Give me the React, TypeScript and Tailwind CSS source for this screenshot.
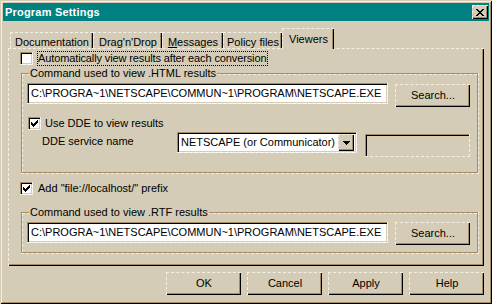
import React from 'react';

const raised =
  'border-t border-l border-dashed border-[#f4f0e6] shadow-[inset_-1px_-1px_0_#000,inset_-2px_-2px_0_#a28d68]';
const sunken =
  'border-r border-b border-dashed border-[#f4f0e6] shadow-[inset_1px_1px_0_#a28d68,inset_2px_2px_0_#000,inset_-1px_-1px_0_#d4ccb6]';

function CheckMark() {
  return (
    <svg width="7" height="7" viewBox="0 0 7 7" shapeRendering="crispEdges" className="block">
      <path
        d="M6 0h1v1h-1z M5 1h2v1h-2z M0 2h1v1h-1z M4 2h3v1h-3z M0 3h2v1h-2z M3 3h3v1h-3z M0 4h5v1h-5z M1 5h3v1h-3z M2 6h1v1h-1z"
        fill="#000"
      />
    </svg>
  );
}

function CheckBox({ checked }: { checked?: boolean }) {
  return (
    <div className={`w-[13px] h-[13px] shrink-0 bg-white pl-[3px] pt-[3px] ${sunken}`}>
      {checked && <CheckMark />}
    </div>
  );
}

function Btn({ children, className = '' }: { children: React.ReactNode; className?: string }) {
  return (
    <div
      className={`w-[75px] h-[23px] shrink-0 bg-[#d4ccb6] flex items-center justify-center pb-[1px] leading-[13px] ${raised} ${className}`}
    >
      {children}
    </div>
  );
}

function Field({ text }: { text: string }) {
  return (
    <div className={`w-[361px] h-[21px] shrink-0 bg-white flex items-center pl-[4px] leading-[13px] whitespace-nowrap overflow-hidden ${sunken}`}>
      {text}
    </div>
  );
}

function Group({
  label,
  className = '',
  children,
}: {
  label: string;
  className?: string;
  children: React.ReactNode;
}) {
  return (
    <div className={`relative border-r border-b border-dashed border-[#f4f0e6] ${className}`}>
      <div className="h-full border border-[#a28d68]">
        <div className="h-full border-t border-l border-dashed border-[#f4f0e6]">{children}</div>
      </div>
      <span className="absolute left-[8px] -top-[6px] px-[1px] bg-[#d4ccb6] leading-[13px] whitespace-nowrap">
        {label}
      </span>
    </div>
  );
}

function Tab({ w, children }: { w: string; children: React.ReactNode }) {
  return (
    <div
      className={`${w} h-[16px] shrink-0 pt-[3px] text-center leading-[13px] whitespace-nowrap border-t border-l border-dashed border-[#f4f0e6] shadow-[inset_-1px_0_0_#000,inset_-2px_0_0_#a28d68]`}
    >
      {children}
    </div>
  );
}

function CloseGlyph() {
  return (
    <svg width="8" height="7" viewBox="0 0 8 7" shapeRendering="crispEdges" className="block">
      <path
        d="M0 0h2v1h-2z M6 0h2v1h-2z M1 1h2v1h-2z M5 1h2v1h-2z M2 2h4v1h-4z M3 3h2v1h-2z M2 4h4v1h-4z M1 5h2v1h-2z M5 5h2v1h-2z M0 6h2v1h-2z M6 6h2v1h-2z"
        fill="#000"
      />
    </svg>
  );
}

function DownArrow() {
  return (
    <svg width="7" height="4" viewBox="0 0 7 4" shapeRendering="crispEdges" className="block">
      <path d="M0 0h7v1h-7z M1 1h5v1h-5z M2 2h3v1h-3z M3 3h1v1h-1z" fill="#000" />
    </svg>
  );
}

export default function App() {
  return (
    <div className="w-[492px] h-[304px] overflow-hidden bg-[#d4ccb6] text-black text-[11px] [font-family:'Liberation_Sans',Arial,sans-serif]">
      <div className="w-full h-full p-[2px] shadow-[inset_1px_1px_0_#d4ccb6,inset_-1px_-1px_0_#000,inset_2px_2px_0_#f4f0e6,inset_-2px_-2px_0_#a28d68]">
        {/* Title bar */}
        <div className="mx-[1px] mt-[1px] h-[18px] bg-[#008080] flex items-center justify-between pl-[2px] pr-[1px]">
          <span className="text-white font-bold text-[11px] tracking-[0.2px] leading-[13px]">Program Settings</span>
          <div className={`w-[16px] h-[14px] bg-[#d4ccb6] pl-[3px] pt-[3px] ${raised}`}>
            <CloseGlyph />
          </div>
        </div>

        {/* Tab control */}
        <div className="px-[6px] mt-[7px]">
          <div className="flex items-end h-[20px] pl-[2px]">
            <Tab w="w-[83px]">Documentation</Tab>
            <Tab w="w-[69px]">Drag&apos;n&apos;Drop</Tab>
            <Tab w="w-[61px]">
              <span className="underline">M</span>essages
            </Tab>
            <Tab w="w-[59px]">Policy files</Tab>
            <div className="relative z-10 w-[52px] h-[21px] -mb-px shrink-0 pt-[4px] bg-[#d4ccb6] text-center leading-[13px] border-t border-l border-dashed border-[#f4f0e6] shadow-[inset_-1px_0_0_#000,inset_-2px_0_0_#a28d68]">
              Viewers
            </div>
          </div>

          <div className={`h-[218px] ${raised}`}>
            <div className="flex flex-col">
              {/* row 1 */}
              <div className="flex items-center mt-[2px] ml-[11px] gap-[4px]">
                <CheckBox />
                <span className="border border-dotted border-black leading-[13px] pr-[1px] tracking-[-0.12px] whitespace-nowrap">
                  Automatically view results after each conversion
                </span>
              </div>

              {/* group 1 */}
              <Group label="Command used to view .HTML results" className="ml-[12px] mt-[7px] w-[458px] h-[101px]">
                <div className="flex items-start mt-[8px] ml-[4px]">
                  <Field text="C:\PROGRA~1\NETSCAPE\COMMUN~1\PROGRAM\NETSCAPE.EXE" />
                  <Btn className="ml-[7px] mt-[1px]">Search...</Btn>
                </div>
                <div className="flex items-center mt-[10px] ml-[5px] gap-[4px]">
                  <CheckBox checked />
                  <span className="leading-[13px] whitespace-nowrap">Use DDE to view results</span>
                </div>
                <div className="flex items-start mt-[2px] ml-[19px]">
                  <span className="w-[135px] shrink-0 mt-[3px] leading-[13px] whitespace-nowrap">DDE service name</span>
                  <div className={`w-[180px] h-[21px] shrink-0 bg-white flex items-center justify-between pl-[4px] pr-[2px] ${sunken}`}>
                    <span className="leading-[13px] whitespace-nowrap">NETSCAPE (or Communicator)</span>
                    <div className={`w-[16px] h-[17px] mt-[1px] bg-[#d4ccb6] flex items-center justify-center ${raised}`}>
                      <DownArrow />
                    </div>
                  </div>
                  <div className={`w-[105px] h-[23px] shrink-0 ml-[8px] mt-[2px] bg-[#d4ccb6] ${sunken}`} />
                </div>
              </Group>

              {/* row 3 */}
              <div className="flex items-center mt-[8px] ml-[11px] gap-[5px]">
                <CheckBox checked />
                <span className="leading-[13px] whitespace-nowrap">Add &quot;file://localhost/&quot; prefix</span>
              </div>

              {/* group 2 */}
              <Group label="Command used to view .RTF results" className="ml-[12px] mt-[17px] w-[458px] h-[42px]">
                <div className="flex items-start mt-[8px] ml-[4px]">
                  <Field text="C:\PROGRA~1\NETSCAPE\COMMUN~1\PROGRAM\NETSCAPE.EXE" />
                  <Btn className="ml-[7px]">Search...</Btn>
                </div>
              </Group>
            </div>
          </div>

          {/* bottom buttons */}
          <div className="flex justify-end gap-[6px] mt-[6px]">
            <Btn>OK</Btn>
            <Btn>Cancel</Btn>
            <Btn>Apply</Btn>
            <Btn>Help</Btn>
          </div>
        </div>
      </div>
    </div>
  );
}
